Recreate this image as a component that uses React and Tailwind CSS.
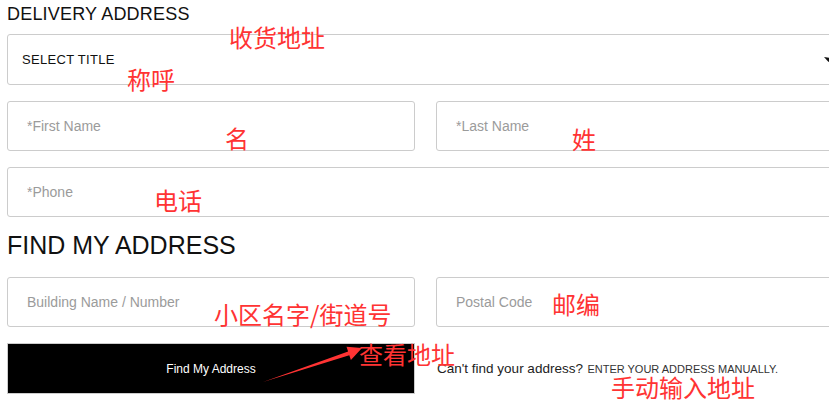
import React from 'react';

const sans = { fontFamily: '"Liberation Sans", Arial, sans-serif' };
const cjk = { fontFamily: '"Noto Sans CJK SC", "Noto Sans", sans-serif' };

function Field({ placeholder }) {
  return (
    <input
      type="text"
      placeholder={placeholder}
      className="block w-full h-[50px] border border-[#cccccc] rounded-[3px] bg-white pl-[19px] text-[14px] text-[#333] placeholder:text-[#9b9b9b] outline-none"
    />
  );
}

// red notes drawn over the form
const notes = [
  { text: '收货地址', cls: 'left-[229px] top-[25px]' },
  { text: '称呼', cls: 'left-[127px] top-[67px]' },
  { text: '名', cls: 'left-[225px] top-[126px]' },
  { text: '姓', cls: 'left-[572px] top-[127px]' },
  { text: '电话', cls: 'left-[154px] top-[188px]' },
  { text: '小区名字/街道号', cls: 'left-[214px] top-[302px]' },
  { text: '邮编', cls: 'left-[552px] top-[292px]' },
  { text: '查看地址', cls: 'left-[359px] top-[342px]' },
  { text: '手动输入地址', cls: 'left-[611px] top-[375px]' },
];

export default function App() {
  return (
    <div className="relative w-[829px] h-[410px] overflow-hidden bg-white" style={sans}>
      <div className="w-[837px] ml-[7px]">
        <h2 className="h-[34px] pt-[2px] text-[18px] leading-[24px] tracking-[0.2px] font-normal text-[#111]">
          DELIVERY ADDRESS
        </h2>

        <div className="flex items-center justify-between h-[51px] border border-[#cccccc] rounded-[3px] pl-[14px] pr-[11px]">
          <span className="text-[13px] tracking-[0.3px] text-[#111]">SELECT TITLE</span>
          <svg width="8" height="5" viewBox="0 0 8 5" className="-mt-[1px]">
            <path d="M0 0 L8 1 L4.5 5 Z" fill="#111" />
          </svg>
        </div>

        <div className="grid grid-cols-2 gap-x-[21px] mt-[16px]">
          <Field placeholder="*First Name" />
          <Field placeholder="*Last Name" />
        </div>

        <div className="mt-[16px]">
          <Field placeholder="*Phone" />
        </div>

        <h2 className="h-[60px] pt-[13px] text-[25px] leading-[30px] font-normal text-[#111]">
          FIND MY ADDRESS
        </h2>

        <div className="grid grid-cols-2 gap-x-[21px]">
          <Field placeholder="Building Name / Number" />
          <Field placeholder="Postal Code" />
        </div>

        <div className="grid grid-cols-2 gap-x-[21px] items-center mt-[16px]">
          <button className="h-[51px] border border-[#cccccc] bg-black text-white text-[12px]">
            Find My Address
          </button>
          <p className="pl-[1px] leading-[14px] text-[#222]">
            <span className="text-[13.5px]">Can't find your address?</span>{' '}
            <span className="text-[11px] text-[#333]">ENTER YOUR ADDRESS MANUALLY.</span>
          </p>
        </div>
      </div>

      {notes.map((n) => (
        <span
          key={n.text}
          className={`absolute ${n.cls} text-[24px] leading-none text-[#ff3333] whitespace-nowrap`}
          style={cjk}
        >
          {n.text}
        </span>
      ))}

      <svg className="absolute left-0 top-0 pointer-events-none" width="829" height="410">
        <polygon
          points="263,382 349.3,355.3 350.9,360 362,348 346.5,346.8 348.1,351.5"
          fill="#ff3333"
        />
      </svg>
    </div>
  );
}
